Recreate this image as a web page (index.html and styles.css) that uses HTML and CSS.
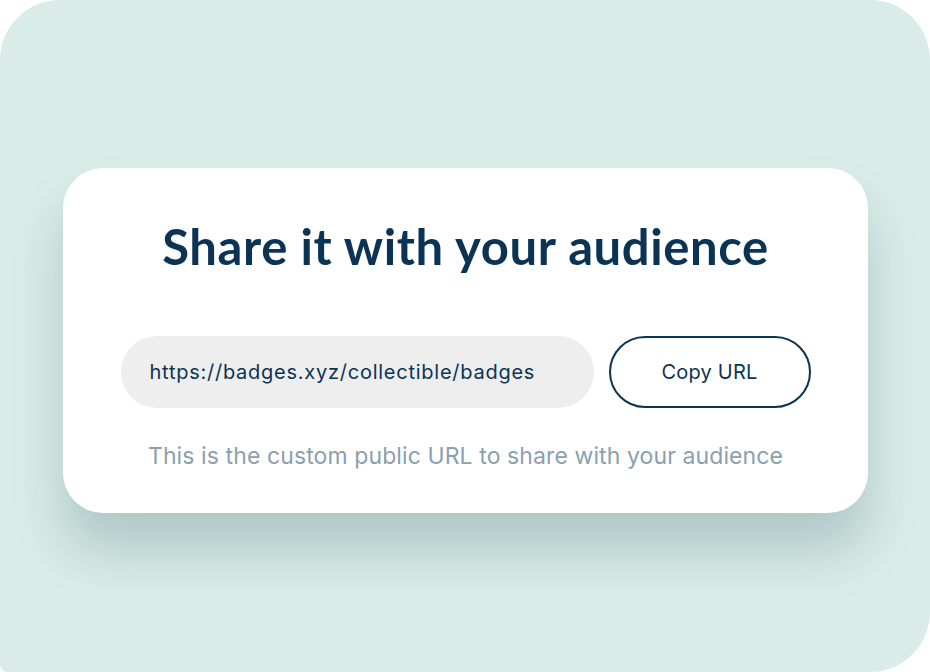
FILE: index.html
```html
<!DOCTYPE html>
<html>
<head>
<meta charset="utf-8">
<link rel="stylesheet" href="styles.css">
</head>
<body>
<div class="frame">
  <div class="card">
    <h1 class="title">Share it with your audience</h1>
    <div class="row">
      <div class="url">https://badges.xyz/collectible/badges</div>
      <button class="copy">Copy URL</button>
    </div>
    <p class="hint">This is the custom public URL to share with your audience</p>
  </div>
</div>
</body>
</html>
```
FILE: styles.css
```css
html, body {
  margin: 0;
  padding: 0;
  background: #ffffff;
}
.frame {
  width: 930px;
  height: 672px;
  background: #d9ece7;
  border-radius: 60px 60px 60px 8px;
  padding: 168px 0 0 63px;
  box-sizing: border-box;
  overflow: hidden;
}
.card {
  width: 805px;
  height: 345px;
  box-sizing: border-box;
  background: #ffffff;
  border-radius: 40px;
  box-shadow: 0 38px 50px rgba(30, 80, 90, 0.22);
  display: flex;
  flex-direction: column;
  align-items: center;
  padding-top: 50px;
}
.title {
  margin: 0;
  font-family: "Lato", "Noto Sans", sans-serif;
  font-weight: 700;
  font-size: 49px;
  letter-spacing: 0.6px;
  line-height: 56px;
  color: #0b3454;
}
.row {
  display: flex;
  gap: 15px;
  margin-top: 62px;
}
.url {
  width: 473px;
  height: 72px;
  box-sizing: border-box;
  border-radius: 36px;
  background: #eeeeee;
  padding-left: 29px;
  display: flex;
  align-items: center;
  font-family: "Inter", "Lato", sans-serif;
  font-size: 20px;
  letter-spacing: 0.75px;
  color: #0b3454;
}
.copy {
  width: 202px;
  height: 72px;
  box-sizing: border-box;
  border: 2px solid #0b3454;
  border-radius: 36px;
  background: #ffffff;
  font-family: "Inter", "Lato", sans-serif;
  font-size: 20px;
  letter-spacing: 0.2px;
  color: #0b3454;
  padding: 0;
}
.hint {
  margin: 33px 0 0;
  font-family: "Inter", "Lato", sans-serif;
  font-size: 23px;
  letter-spacing: 0.1px;
  line-height: 30px;
  color: #8a9fb0;
}
```
